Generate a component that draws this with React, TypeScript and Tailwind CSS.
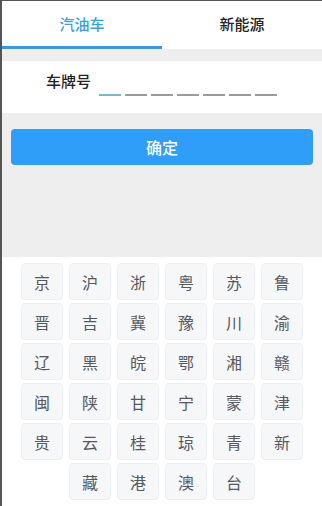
import { useState } from "react";

const rows = [
  ["京", "沪", "浙", "粤", "苏", "鲁"],
  ["晋", "吉", "冀", "豫", "川", "渝"],
  ["辽", "黑", "皖", "鄂", "湘", "赣"],
  ["闽", "陕", "甘", "宁", "蒙", "津"],
  ["贵", "云", "桂", "琼", "青", "新"],
  ["", "藏", "港", "澳", "台", ""],
];

export default function App() {
  const [tab, setTab] = useState(0);
  const [plate, setPlate] = useState<string[]>([]);

  return (
    <div
      className="w-[322px] h-[506px] overflow-hidden bg-[#eeeeee] border-l-2 border-t border-[#555555] flex flex-col"
      style={{ fontFamily: '"Noto Sans CJK SC", "Noto Sans", sans-serif' }}
    >
      {/* tabs */}
      <div className="flex bg-white h-[48px]">
        {["汽油车", "新能源"].map((t, i) => (
          <button
            key={t}
            onClick={() => setTab(i)}
            className={`flex-1 flex items-center justify-center text-[15px] font-medium border-b-[3px] ${
              tab === i ? "text-[#3a9fe3] border-[#3a97e0]" : "text-[#222] border-transparent"
            }`}
          >
            <span className="mt-[2px]">{t}</span>
          </button>
        ))}
      </div>

      {/* plate input */}
      <div className="mt-[12px] bg-white h-[52px] flex items-center pl-[44px]">
        <span className="text-[15px] font-medium text-[#222] -mt-[11px]">车牌号</span>
        <div className="flex gap-[4px] ml-[8px] mt-[16px]">
          {Array.from({ length: 7 }).map((_, i) => (
            <div key={i} className="w-[22px] flex flex-col items-center">
              <span className="text-[13px] h-0 leading-none -translate-y-[16px] text-[#333]">{plate[i] ?? ""}</span>
              <div className={`h-[2px] w-full ${i === plate.length ? "bg-[#6cbfd0]" : "bg-[#9a9a9a]"}`} />
            </div>
          ))}
        </div>
      </div>

      {/* confirm */}
      <div className="px-[9px] pt-[16px]">
        <button className="w-full h-[36px] rounded-[4px] bg-[#2e9ef8] text-white text-[16px] font-medium">
          确定
        </button>
      </div>

      <div className="flex-1" />

      {/* keyboard */}
      <div className="bg-white h-[249px] pt-[6px] pl-[19px]">
        <div className="grid grid-cols-[repeat(6,42px)] gap-x-[6px] gap-y-[3px]">
          {rows.flat().map((k, i) =>
            k ? (
              <button
                key={i}
                onClick={() => setPlate((p) => (p.length < 7 ? [...p, k] : p))}
                className="h-[37px] rounded-[4px] bg-[#f6f7f9] border border-[#eceef1] text-[16px] text-[#555a62] flex items-center justify-center"
              >
                {k}
              </button>
            ) : (
              <div key={i} />
            )
          )}
        </div>
      </div>
    </div>
  );
}
